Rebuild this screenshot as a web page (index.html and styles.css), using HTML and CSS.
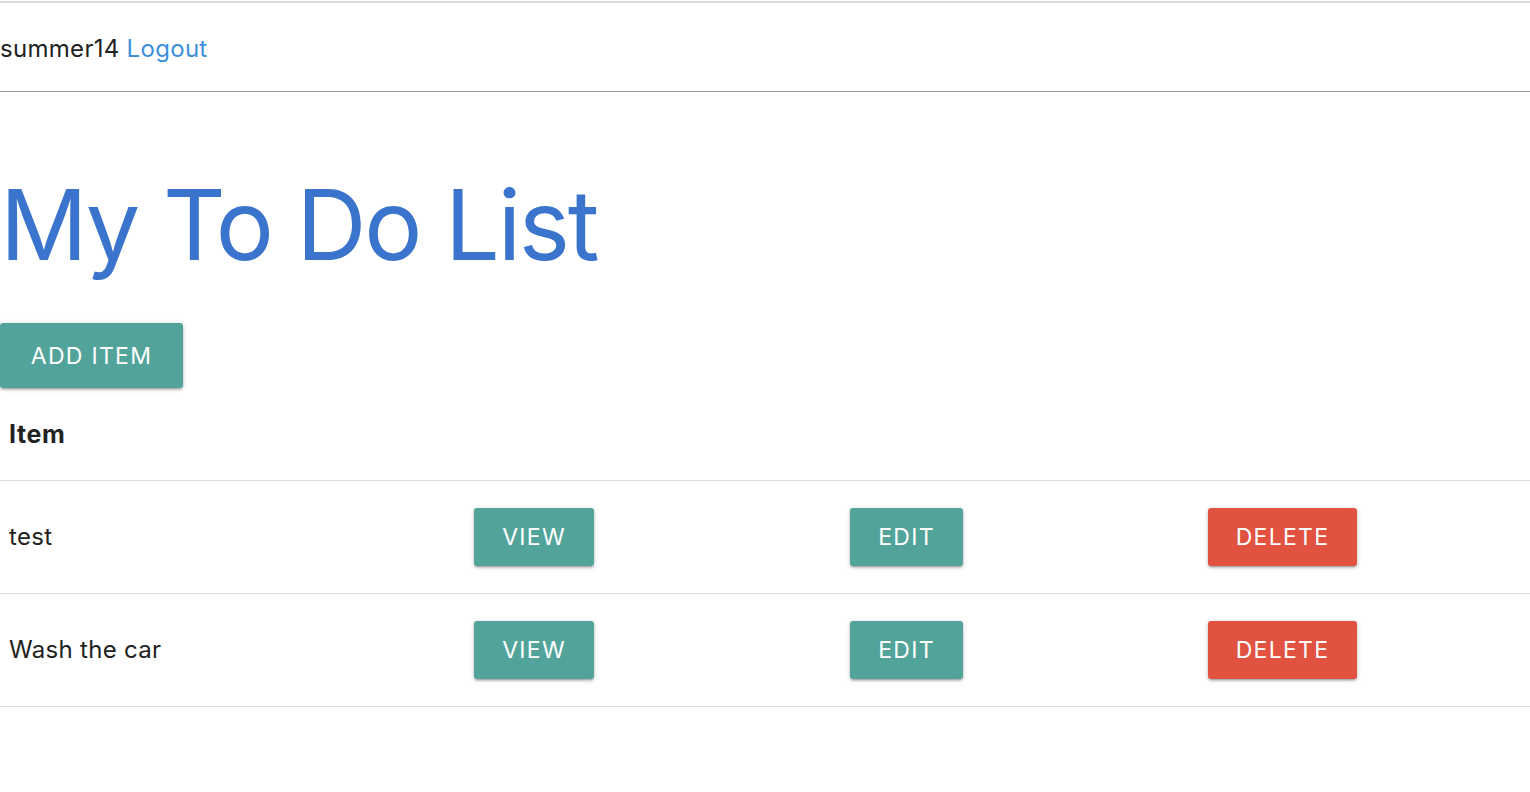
FILE: index.html
```html
<!DOCTYPE html>
<html>
<head>
<meta charset="utf-8">
<link rel="stylesheet" href="styles.css">
</head>
<body>
<div class="topline"></div>
<nav class="nav">
  <span class="user">summer14</span> <a class="logout" href="#">Logout</a>
</nav>
<main class="main">
  <h1 class="title">My To Do List</h1>
  <button class="btn btn-add">ADD ITEM</button>
  <table class="table">
    <thead>
      <tr>
        <th class="c1">Item</th>
        <th class="c2"></th>
        <th class="c3"></th>
        <th class="c4"></th>
      </tr>
    </thead>
    <tbody>
      <tr>
        <td>test</td>
        <td><button class="btn btn-view">VIEW</button></td>
        <td><button class="btn btn-edit">EDIT</button></td>
        <td><button class="btn btn-del">DELETE</button></td>
      </tr>
      <tr>
        <td>Wash the car</td>
        <td><button class="btn btn-view">VIEW</button></td>
        <td><button class="btn btn-edit">EDIT</button></td>
        <td><button class="btn btn-del">DELETE</button></td>
      </tr>
    </tbody>
  </table>
</main>
</body>
</html>
```

FILE: styles.css
```css
html, body {
  margin: 0;
  padding: 0;
  background: #fff;
  font-family: Inter, "Noto Sans", sans-serif;
  color: #222;
}
.topline {
  height: 2px;
  margin-top: 1px;
  background: #dcdcdc;
}
.nav {
  height: 89px;
  box-sizing: border-box;
  border-bottom: 1px solid #9a9a9a;
  display: flex;
  align-items: center;
  gap: 7px;
  font-size: 24px;
  letter-spacing: 0.3px;
  padding-top: 2px;
}
.user { color: #222; }
.logout { color: #3d8fdc; text-decoration: none; }
.main { padding: 0; }
.title {
  margin: 78px 0 0 0;
  font-weight: 400;
  font-size: 97px;
  line-height: 140px;
  height: 153px;
  color: #3a74cc;
  letter-spacing: -2.3px;
  position: relative;
  top: -15px;
}
.btn {
  border: none;
  color: #fff;
  font-family: Inter, "Noto Sans", sans-serif;
  font-size: 23px;
  letter-spacing: 1.3px;
  border-radius: 3px;
  box-shadow: 0 2px 2px 0 rgba(0,0,0,0.14), 0 3px 1px -2px rgba(0,0,0,0.12), 0 1px 5px 0 rgba(0,0,0,0.2);
  cursor: pointer;
  padding: 0;
}
.btn-add {
  width: 183px;
  height: 65px;
  background: #52a49a;
  display: block;
}
.btn-view, .btn-edit {
  background: #52a49a;
  height: 58px;
}
.btn-view { width: 120px; }
.btn-edit { width: 113px; }
.btn-del {
  background: #e25241;
  height: 58px;
  width: 149px;
}
.table {
  width: 100%;
  border-collapse: collapse;
  margin-top: 12px;
}
.table th, .table td {
  text-align: left;
  padding: 0 9px;
  font-size: 24px;
  letter-spacing: 0.3px;
  box-sizing: border-box;
}
.table th {
  height: 80px;
  font-weight: 700;
  font-size: 25px;
  letter-spacing: 0.6px;
  border-bottom: 1px solid #dedede;
  padding-bottom: 12px;
}
.table td {
  height: 113px;
  border-bottom: 1px solid #dedede;
}
.c1 { width: 465px; }
.c2 { width: 376px; }
.c3 { width: 358px; }
```
